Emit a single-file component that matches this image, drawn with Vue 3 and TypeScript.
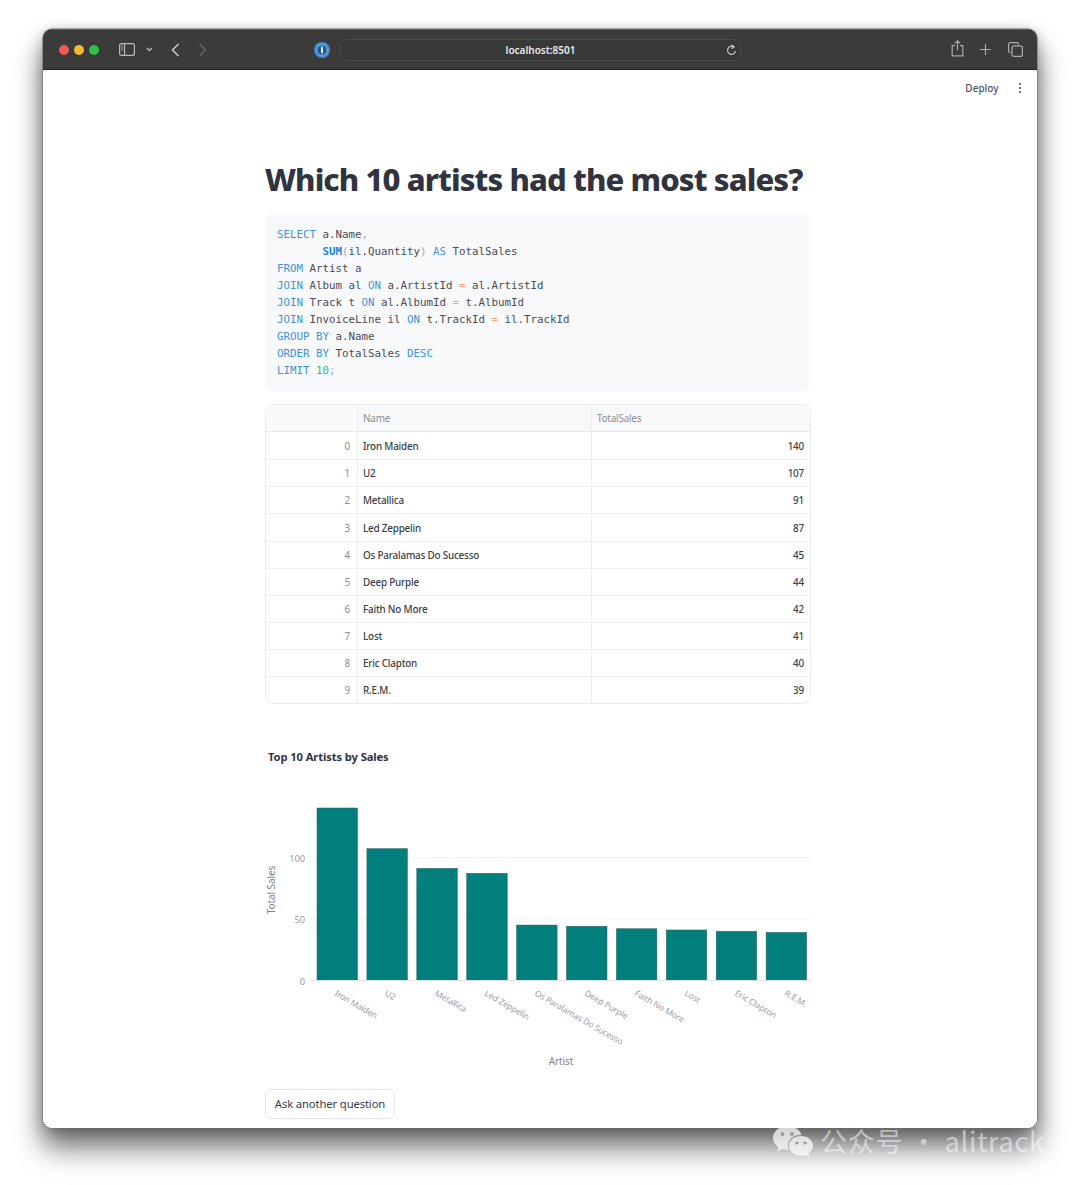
<script setup lang="ts">
const rows: [string, number][] = [
  ['Iron Maiden', 140], ['U2', 107], ['Metallica', 91], ['Led Zeppelin', 87],
  ['Os Paralamas Do Sucesso', 45], ['Deep Purple', 44], ['Faith No More', 42],
  ['Lost', 41], ['Eric Clapton', 40], ['R.E.M.', 39],
]
const base = 200.500
const scale = 172.500 / 140
const bars = rows.map(([name, v], i) => ({
  name,
  x: 52 + i * 49.900,
  y: base - v * scale,
  h: v * scale,
  lx: 69 + i * 50,
}))
</script>

<template>
  <div class="stage">
    <div class="window">
      <header class="toolbar">
        <div class="lights"><i class="l r"></i><i class="l y"></i><i class="l g"></i></div>
        <svg class="ic sidebar" width="16" height="13" viewBox="0 0 16 13" fill="none" stroke="#b9b9b6" stroke-width="1.2"><rect x=".6" y=".6" width="14.8" height="11.8" rx="2"/><path d="M5.5.6v11.8"/><path d="M2.2 3h1.6M2.2 5h1.6M2.2 7h1.6" stroke-width="1"/></svg>
        <svg class="ic chev" width="7" height="5" viewBox="0 0 7 5" fill="none" stroke="#b9b9b6" stroke-width="1.4"><path d="M1 1l2.5 2.5L6 1"/></svg>
        <svg class="ic back" width="9" height="14" viewBox="0 0 9 14" fill="none" stroke="#c6c6c3" stroke-width="1.6"><path d="M7.5 1L1.5 7l6 6"/></svg>
        <svg class="ic fwd" width="9" height="14" viewBox="0 0 9 14" fill="none" stroke="#666664" stroke-width="1.6"><path d="M1.5 1l6 6-6 6"/></svg>
        <svg class="ic onepw" width="16" height="16" viewBox="0 0 16 16"><circle cx="8" cy="8" r="8" fill="#3f8fd8"/><circle cx="8" cy="8" r="5.200" fill="#2a5688" stroke="#8fbde8" stroke-width=".8"/><rect x="7" y="4.6" width="2" height="6.8" rx=".8" fill="#dbe9f7"/></svg>
        <div class="address">
          <span class="url">localhost:8501</span>
          <svg class="reload" width="11" height="12" viewBox="0 0 11 12" fill="none" stroke="#c6c6c3" stroke-width="1.2"><path d="M7.9 3.1A4 4 0 1 0 9.5 7"/><path d="M5.6 .8l2.500 2.200-2.500 1.800"/></svg>
        </div>
        <svg class="ic share" width="13" height="17" viewBox="0 0 13 17" fill="none" stroke="#a9a9a6" stroke-width="1.2"><path d="M4 5.600H1.200v10.200h10.600V5.600H9"/><path d="M6.500 10.500V1M3.900 3.400L6.500 .9l2.600 2.500"/></svg>
        <svg class="ic plus" width="11" height="11" viewBox="0 0 11 11" fill="none" stroke="#a9a9a6" stroke-width="1.2"><path d="M5.500 0v11M0 5.500h11"/></svg>
        <svg class="ic tabs" width="15" height="15" viewBox="0 0 15 15" fill="none" stroke="#a9a9a6" stroke-width="1.2"><path d="M2.500 10.500h-.3A1.600 1.600 0 0 1 .6 8.900V2.200A1.600 1.600 0 0 1 2.200 .6h6.700a1.600 1.600 0 0 1 1.600 1.600v.3"/><rect x="4" y="3.800" width="10.400" height="10.600" rx="2"/></svg>
      </header>
      <div class="page">
        <div class="appbar">
          <span class="deploy">Deploy</span>
          <span class="kebab"><i></i><i></i><i></i></span>
        </div>
        <main class="main">
          <h1 class="title">Which 10 artists had the most sales?</h1>
          <pre class="code"><span class="k">SELECT</span> a.Name<span class="p">,</span>
       <span class="f">SUM</span><span class="p">(</span>il.Quantity<span class="p">)</span> <span class="k">AS</span> TotalSales
<span class="k">FROM</span> Artist a
<span class="k">JOIN</span> Album al <span class="k">ON</span> a.ArtistId <span class="o">=</span> al.ArtistId
<span class="k">JOIN</span> Track t <span class="k">ON</span> al.AlbumId <span class="o">=</span> t.AlbumId
<span class="k">JOIN</span> InvoiceLine il <span class="k">ON</span> t.TrackId <span class="o">=</span> il.TrackId
<span class="k">GROUP</span> <span class="k">BY</span> a.Name
<span class="k">ORDER</span> <span class="k">BY</span> TotalSales <span class="k">DESC</span>
<span class="k">LIMIT</span> <span class="n">10</span><span class="p">;</span></pre>
          <div class="table">
            <div class="tr head">
              <div class="td"></div>
              <div class="td">Name</div>
              <div class="td">TotalSales</div>
            </div>
            <div v-for="(r, i) in rows" :key="r[0]" class="tr">
              <div class="td idx">{{ i }}</div>
              <div class="td">{{ r[0] }}</div>
              <div class="td num">{{ r[1] }}</div>
            </div>
          </div>
          <h3 class="chart-title">Top 10 Artists by Sales</h3>
          <svg class="chart" width="546" height="300" viewBox="0 0 546 300">
            <line x1="46" x2="546" y1="77.500" y2="77.500" stroke="#f0f2f6"/>
            <line x1="46" x2="546" y1="139" y2="139" stroke="#f0f2f6"/>
            <rect v-for="b in bars" :key="b.name" :x="b.x" :y="b.y" width="40.500" :height="b.h" fill="#007f7d" stroke="#2f5f60" stroke-width=".5"/>
            <line x1="46" x2="546" :y1="base" :y2="base" stroke="#e0e4ea"/>
            <text class="tick" x="40" y="81.500" text-anchor="end">100</text>
            <text class="tick" x="40" y="143" text-anchor="end">50</text>
            <text class="tick" x="40" y="204.500" text-anchor="end">0</text>
            <text class="axis" transform="translate(10 110) rotate(-90)" text-anchor="middle">Total Sales</text>
            <text v-for="b in bars" :key="'l' + b.name" class="tick xl" :transform="`translate(${b.lx} 215) rotate(30)`">{{ b.name }}</text>
            <text class="axis" x="296" y="284.500" text-anchor="middle">Artist</text>
          </svg>
          <button class="ask" type="button">Ask another question</button>
        </main>
      </div>
    </div>
    <div class="mark">
      <svg width="42" height="32" viewBox="0 0 42 32"><path d="M15.500 1C7.500 1 1 6.300 1 13c0 3.800 2.200 7.100 5.500 9.300L5.200 26.500l5-2.500c1.700.5 3.500.8 5.300.8l1.200 0C16 23 16 21.800 16 20.500 16 14 22 9.500 29.600 9.900 27.800 4.700 22.200 1 15.500 1z" fill="#fff" fill-opacity=".72"/><path d="M29 11c-6.900 0-12 4.200-12 9.800 0 5.600 5.100 9.800 12 9.800 1.500 0 2.900-.2 4.200-.7l4.100 2-1-3.500c2.900-1.800 4.700-4.600 4.700-7.600C41 15.200 35.900 11 29 11z" fill="#fff" fill-opacity=".72"/><circle cx="10.500" cy="9" r="1.900" fill="#9a9a9a"/><circle cx="20" cy="9" r="1.900" fill="#9a9a9a"/><circle cx="25" cy="18" r="1.600" fill="#9a9a9a"/><circle cx="33" cy="18" r="1.600" fill="#9a9a9a"/></svg>
      <span class="mark-text">公众号 · alitrack</span>
    </div>
  </div>
</template>

<style>
html, body { margin: 0; background: #fff; overflow: hidden; }
</style>

<style scoped>
.stage {
  position: relative;
  width: 1080px;
  height: 1185px;
  padding: 29px 43px 57px;
  box-sizing: border-box;
  background: #fff;
  overflow: hidden;
}
.window {
  width: 994px;
  height: 1099px;
  display: flex;
  flex-direction: column;
  border-radius: 9px;
  overflow: hidden;
  background: #fff;
  box-shadow: 0 0 0 .6px #6f6f6f, 0 16px 26px rgba(0, 0, 0, .48), 0 24px 34px rgba(0, 0, 0, .2), 0 2px 12px rgba(0, 0, 0, .22);
}
.toolbar {
  height: 41px;
  flex: none;
  display: flex;
  align-items: center;
  background: #3b3b39;
  border-top: 1px solid #5c5c5a;
  border-bottom: 1px solid #2a1c16;
  box-sizing: border-box;
}
.lights { display: flex; gap: 5px; margin-left: 16px; }
.l { width: 10px; height: 10px; border-radius: 50%; display: block; }
.r { background: #f15b55; }
.y { background: #f6bb30; }
.g { background: #2fc244; }
.ic { flex: none; display: block; }
.sidebar { margin-left: 20px; }
.chev { margin-left: 11px; }
.back { margin-left: 18px; }
.fwd { margin-left: 18px; }
.onepw { margin-left: 107px; }
.address {
  position: relative;
  width: 401px;
  height: 22px;
  margin-left: 10px;
  border: 1px solid #4b4b49;
  border-radius: 7px;
  box-sizing: border-box;
  display: flex;
  align-items: center;
  justify-content: center;
  background: #383836;
}
.url { font: 600 10px "Noto Sans", sans-serif; color: #ececea; }
.reload { position: absolute; right: 3px; top: 4px; }
.share { margin-left: 210px; margin-top: -3px; }
.plus { margin-left: 16px; }
.tabs { margin-left: 17px; }
.page { flex: 1; min-height: 0; background: #fff; overflow: hidden; }
.appbar {
  height: 36px;
  display: flex;
  align-items: center;
  justify-content: flex-end;
  padding-right: 16px;
  margin-bottom: 53px;
}
.deploy { font: 500 10px "Noto Sans", sans-serif; color: #52535c; margin-right: 20px; }
.kebab { display: flex; flex-direction: column; gap: 1.500px; }
.kebab i { width: 2.500px; height: 2.500px; border-radius: 50%; background: #44454e; display: block; }
.main { width: 546px; margin-left: 222px; }
.title {
  margin: 0 0 14px;
  font: 800 31px/40px "Noto Sans", sans-serif;
  letter-spacing: -.9px;
  color: #31333f;
  white-space: nowrap;
}
.code {
  margin: 0 0 13px;
  height: 178px;
  box-sizing: border-box;
  padding: 13px 12px 0;
  background: #f8f9fb;
  border-radius: 8px;
  font: 400 10.800px/17px "DejaVu Sans Mono", monospace;
  color: #4a4c57;
}
.k { color: #3d94d8; }
.f { color: #1c83e1; font-weight: 700; }
.o { color: #f0a878; }
.n { color: #3fb58a; }
.p { color: #a0a2ab; }
.table {
  box-sizing: border-box;
  border: 1px solid #eaecf0;
  border-radius: 8px;
  overflow: hidden;
  font: 500 9.900px "Noto Sans", sans-serif;
  color: #3c3e49;
}
.tr {
  display: grid;
  grid-template-columns: 91px 234px 1fr;
  height: 27.100px;
  border-top: 1px solid #eceef2;
  box-sizing: border-box;
}
.tr.head {
  height: 27.200px;
  border-top: 0;
  background: #f8f9fb;
  color: #8a8d96;
  font-weight: 400;
  border-bottom: 1px solid #e6e8ec;
}
.tr.head + .tr { border-top: 0; }
.td {
  display: flex;
  align-items: center;
  padding: 0 6px 0 5px;
  border-left: 1px solid #eceef2;
  letter-spacing: -.2px;
}
.td:first-child { border-left: 0; }
.idx { justify-content: flex-end; color: #8a8d96; font-weight: 400; padding-right: 7px; }
.num { justify-content: flex-end; }
.chart-title {
  margin: 44.500px 0 0 3px;
  height: 16px;
  font: 700 11.200px/16px "Noto Sans", sans-serif;
  letter-spacing: -.1px;
  color: #31333f;
}
.chart { display: block; margin-top: 15.300px; }
.tick { font: 400 9.300px "Noto Sans", sans-serif; fill: #9a9ca4; letter-spacing: -.1px; }
.xl { font-size: 8.500px; }
.axis { font: 400 10px "Noto Sans", sans-serif; fill: #81838c; letter-spacing: -.1px; }
.ask {
  display: block;
  width: 130px;
  height: 30px;
  margin-top: 9px;
  padding: 0;
  background: #fff;
  border: 1px solid #e3e5ea;
  border-radius: 6px;
  font: 400 11.300px "Noto Sans", sans-serif;
  letter-spacing: -.15px;
  color: #3c3e49;
}
.mark {
  position: absolute;
  left: 772px;
  top: 1125px;
  display: flex;
  align-items: center;
  gap: 6px;
}
.mark-text {
  font: 400 27px/32px "Noto Sans CJK SC", "Noto Sans", sans-serif;
  color: rgba(255, 255, 255, .5);
  white-space: nowrap;
  letter-spacing: .75px;
}
</style>
